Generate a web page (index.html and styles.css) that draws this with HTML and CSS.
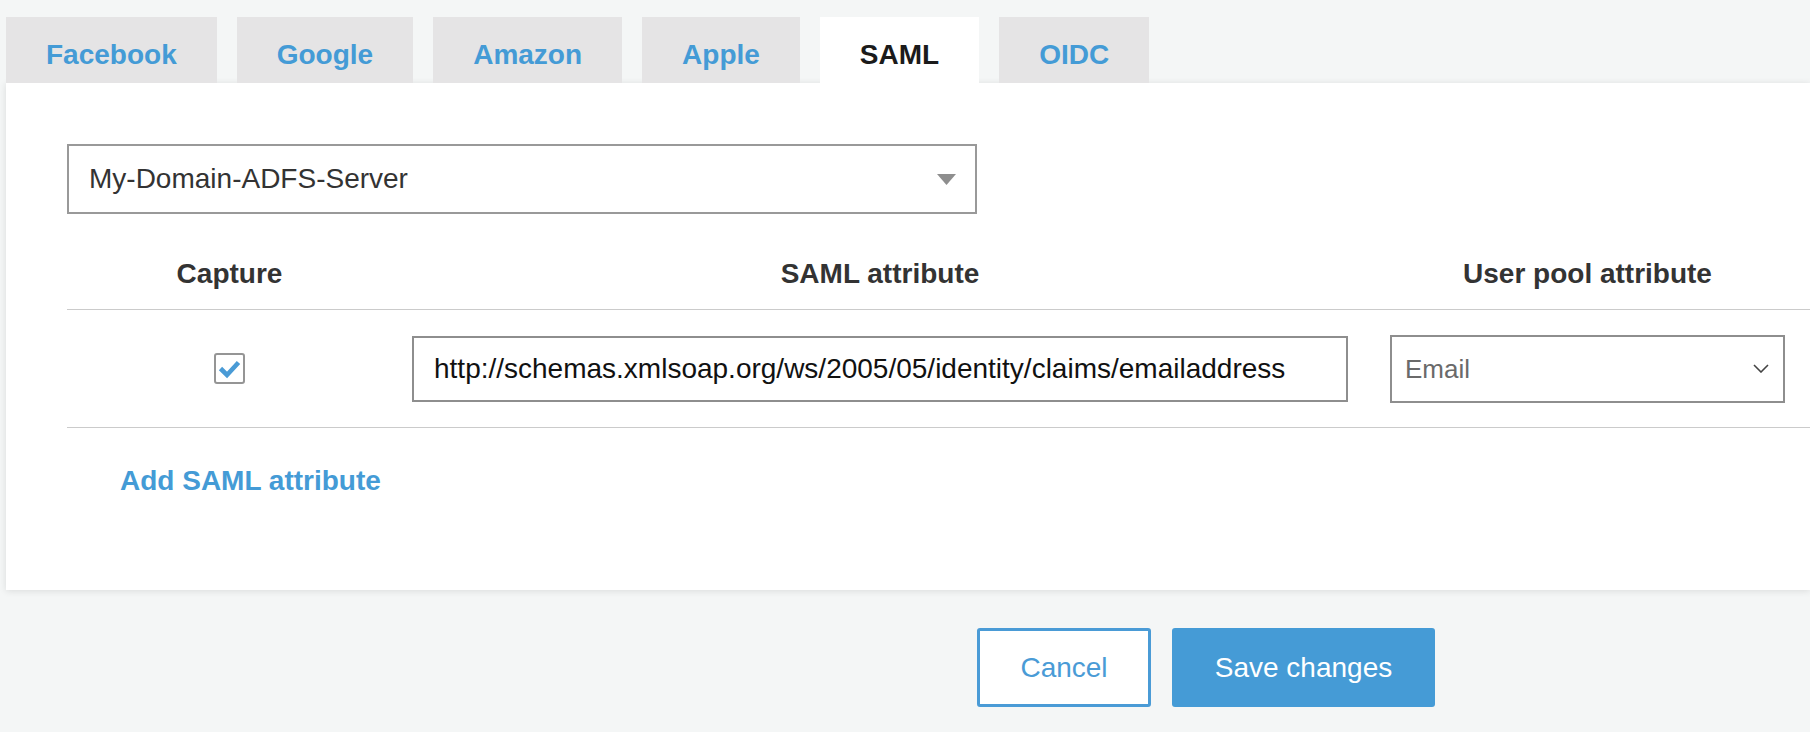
FILE: index.html
```html
<!DOCTYPE html>
<html lang="en">
<head>
<meta charset="utf-8">
<title>Attribute mapping</title>
<link rel="stylesheet" href="styles.css">
</head>
<body>
<div class="page">
  <nav class="tabs">
    <div class="tab">Facebook</div>
    <div class="tab">Google</div>
    <div class="tab">Amazon</div>
    <div class="tab">Apple</div>
    <div class="tab active">SAML</div>
    <div class="tab">OIDC</div>
  </nav>
  <section class="panel">
    <div class="idp-select">
      <span>My-Domain-ADFS-Server</span>
      <svg class="caret" width="19" height="11" viewBox="0 0 19 11"><path d="M0 0 H19 L9.5 11 Z" fill="#8e8e8e"/></svg>
    </div>
    <div class="attr-table">
      <div class="row head">
        <div class="cell c1">Capture</div>
        <div class="cell c2">SAML attribute</div>
        <div class="cell c3">User pool attribute</div>
      </div>
      <div class="row data">
        <div class="cell c1">
          <span class="checkbox">
            <svg width="27" height="27" viewBox="0 0 27 27"><path d="M4.5 13.5 L11 20 L22.5 7.5" fill="none" stroke="#4a9bd6" stroke-width="4.6" stroke-linejoin="miter"/></svg>
          </span>
        </div>
        <div class="cell c2">
          <div class="text-field">http://schemas.xmlsoap.org/ws/2005/05/identity/claims/emailaddress</div>
        </div>
        <div class="cell c3">
          <div class="pool-select">
            <span>Email</span>
            <svg width="16" height="9" viewBox="0 0 16 9"><path d="M1 1 L8 8 L15 1" fill="none" stroke="#444" stroke-width="1.6"/></svg>
          </div>
        </div>
      </div>
    </div>
    <a class="add-link">Add SAML attribute</a>
  </section>
  <div class="actions">
    <button class="btn cancel">Cancel</button>
    <button class="btn save">Save changes</button>
  </div>
</div>
</body>
</html>
```
FILE: styles.css
```css
html, body {
  margin: 0;
  padding: 0;
  background: #f4f6f6;
  overflow: hidden;
}
body {
  font-family: "Liberation Sans", Arial, Helvetica, sans-serif;
  font-size: 28px;
  line-height: 32px;
  color: #333;
}
.page {
  width: 1810px;
  height: 732px;
  padding: 17px 0 0 6px;
  box-sizing: border-box;
}
.tabs {
  display: flex;
  gap: 20px;
}
.tab {
  height: 66px;
  box-sizing: border-box;
  padding: 22px 40px 12px;
  background: #e5e4e5;
  color: #449bd6;
  font-weight: bold;
}
.tab.active {
  background: #fff;
  color: #1b1b1b;
}
.panel {
  background: #fff;
  padding: 61px 0 93px 61px;
  box-shadow: 0 1px 7px rgba(0, 0, 0, 0.11);
}
.idp-select {
  width: 910px;
  height: 70px;
  box-sizing: border-box;
  border: 2px solid #999;
  padding: 0 19px 0 20px;
  display: flex;
  align-items: center;
  justify-content: space-between;
  color: #333;
}
.row {
  display: grid;
  grid-template-columns: 345px 978px 395px;
  border-bottom: 1px solid #cbcbcb;
}
.row.head {
  padding: 44px 0 19px;
  font-weight: bold;
  color: #333;
}
.row.data {
  min-height: 117px;
  align-items: center;
}
.cell.c1 {
  padding-right: 20px;
  text-align: center;
  display: flex;
  justify-content: center;
}
.cell.c2 {
  padding-right: 42px;
  text-align: center;
}
.cell.c3 {
  text-align: center;
}
.checkbox {
  width: 31px;
  height: 31px;
  box-sizing: border-box;
  border: 2px solid #959595;
  border-radius: 3px;
  display: flex;
  align-items: center;
  justify-content: center;
}
.checkbox svg {
  display: block;
}
.text-field {
  width: 936px;
  height: 66px;
  box-sizing: border-box;
  border: 2px solid #8e8e8e;
  padding: 0 20px;
  display: flex;
  align-items: center;
  color: #111;
  text-align: left;
  white-space: nowrap;
}
.pool-select {
  width: 395px;
  height: 68px;
  box-sizing: border-box;
  border: 2px solid #8e8e8e;
  padding: 0 14px 0 13px;
  display: flex;
  align-items: center;
  justify-content: space-between;
  font-size: 26px;
  color: #6a6a6a;
}
.add-link {
  display: inline-block;
  margin: 37px 0 0 53px;
  font-weight: bold;
  color: #449bd6;
  cursor: pointer;
}
.actions {
  display: flex;
  justify-content: flex-end;
  gap: 21px;
  margin-top: 38px;
  padding-right: 375px;
}
.btn {
  height: 79px;
  font-family: inherit;
  font-size: 28px;
  border-radius: 3px;
  box-sizing: border-box;
  cursor: pointer;
}
.btn.cancel {
  width: 174px;
  background: #fff;
  border: 3px solid #4a9bd6;
  color: #4a9bd6;
}
.btn.save {
  width: 263px;
  background: #459bd6;
  border: none;
  color: #fff;
}
```
